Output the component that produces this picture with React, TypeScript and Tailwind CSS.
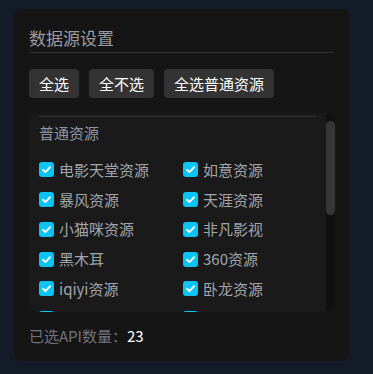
import React from 'react';

const sources = [
  '电影天堂资源',
  '如意资源',
  '暴风资源',
  '天涯资源',
  '小猫咪资源',
  '非凡影视',
  '黑木耳',
  '360资源',
  'iqiyi资源',
  '卧龙资源',
  '华为吧资源',
  '极速资源',
];

function Check() {
  return (
    <span className="flex h-[15px] w-[15px] shrink-0 items-center justify-center rounded-[3px] bg-[#0cc4f4]">
      <svg viewBox="0 0 12 12" className="h-[11px] w-[11px]" fill="none">
        <path d="M2.2 6.3 4.8 8.8 9.9 3.4" stroke="#fff" strokeWidth="2" strokeLinecap="round" strokeLinejoin="round" />
      </svg>
    </span>
  );
}

export default function App() {
  return (
    <div
      className="h-[374px] w-full overflow-hidden bg-[#131b29] pt-[9px] pl-[14px]"
      style={{ fontFamily: '"Noto Sans CJK SC", "Noto Sans", sans-serif' }}
    >
      <div className="h-[352px] w-[335px] rounded-lg bg-[#151515] px-[15px] pt-[15px]">
        <div className="h-[29px] border-b border-[#333] text-[17px] leading-[28px] text-[#9a9ca3]">
          数据源设置
        </div>

        <div className="mt-[16px] flex gap-[10px]">
          {['全选', '全不选', '全选普通资源'].map((label) => (
            <button
              key={label}
              className="h-[29px] rounded-[4px] bg-[#333] px-[10px] text-[15px] leading-[29px] text-white"
            >
              {label}
            </button>
          ))}
        </div>

        <div className="mt-[15px] flex h-[199px] w-[306px] overflow-hidden rounded-lg bg-[#1a1a1a]">
          <div className="flex-1 overflow-hidden pl-[10px] pr-[10px]">
            <div className="mt-[3px] border-t border-[#333]" />
            <div className="mt-[6px] text-[15px] leading-[20px] text-[#8e97a6]">普通资源</div>
            <div className="mt-[12px] grid grid-cols-[144px_1fr]">
              {sources.map((name) => (
                <label key={name} className="flex h-[29.75px] items-center gap-[5px]">
                  <Check />
                  <span className="whitespace-nowrap text-[15px] leading-[20px] text-[#a2a6ad]">{name}</span>
                </label>
              ))}
            </div>
          </div>
          <div className="w-[9px] shrink-0 rounded-full bg-[#101010]">
            <div className="mt-[8px] h-[94px] rounded-full bg-[#363636]" />
          </div>
        </div>

        <div className="mt-[14px] text-[15px] leading-[20px] text-[#70747c]">
          已选API数量：<span className="text-white">23</span>
        </div>
      </div>
    </div>
  );
}
